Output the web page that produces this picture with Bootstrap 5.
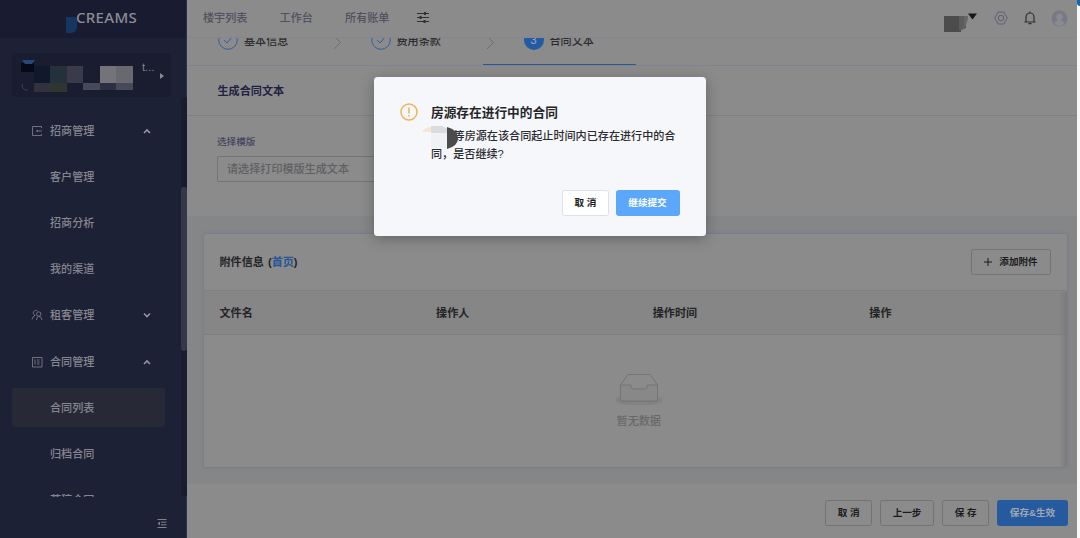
<!DOCTYPE html>
<html lang="zh-CN">
<head>
<meta charset="utf-8">
<title>CREAMS</title>
<link href="https://cdn.jsdelivr.net/npm/bootstrap@5.3.0/dist/css/bootstrap.min.css" rel="stylesheet">
<style>
body{width:1080px;height:538px;overflow:hidden;background:#f7f7f8;font:500 11.1px/18px "Liberation Sans","Noto Sans CJK SC",sans-serif;color:#242426}
svg{display:block;fill:none;stroke:currentColor;flex:none}
svg.solid{stroke:none}
.shell{height:538px}
.side{width:187px;background:#1d2136;color:#85868f;border-right:1px solid #2c2f48;position:relative}
.brand{height:38px;background:#191c30;padding:7px 0 0 76px;position:relative;font:500 15px/21px "Noto Sans",sans-serif;letter-spacing:.3px;color:#8b8c96}
.brand-blot{position:absolute;left:66px;top:17px;width:11px;height:16px;background:#16365f;border-radius:0 0 6px 0}
.org{margin:15px 15px 10.5px 12px;height:44px;background:#1a1c30;border-radius:4px;position:relative}
.org svg.mosaic{position:absolute;left:9px;top:6px}
.org-name{position:absolute;left:130px;top:5px}
.org-arrow{position:absolute;left:148px;top:20px;border:3px solid transparent;border-left:4px solid #8b8b90;border-right:0;height:0;width:0}
.menu-wrap{height:389px;overflow:hidden}
.track{position:absolute;right:-1px;top:97px;width:6px;height:399px;background:#191b2f}
.thumb{height:164px;margin-top:90px;border-radius:3px;background:#353947}
.menu-row{height:46.2px;padding-left:31px}
.menu-row svg{width:12px;height:12px;margin-right:7px;color:#777985;stroke-width:.9}
.menu-row .chev{margin:0 35px 0 auto;width:8px;height:8px;color:#94959d;stroke-width:1.6}
.sub-row{padding-left:50px}
.sub-active{background:#272936;margin:3.5px 21px 3.5px 12px;height:39.2px;padding-left:38px;border-radius:3px}
.fold{margin:22px 19px 0 auto;color:#80828b}
.page-col{width:890px;background:#8b8b8b}
.topbar{height:38px;background:#8b8b8b;border-bottom:1px solid #868690;padding:0 9px 2px 16px;color:#50515f}
.topbar .top-link{margin-right:32.2px}
.topbar .top-last{margin-right:28px}
.topbar svg{margin-top:1px}
.topbar .tune{margin-top:0}
.steps{height:27.5px;border-bottom:1px solid #80838e;overflow:hidden;color:#2b2b2d}
.step-in{position:relative;width:153px;height:27.5px;padding-left:41px}
.step-first{width:142.5px;padding-left:31px}
.step-in .txt{margin-top:-22px;padding-left:6px}
.step-in .ring,.step-num{margin-top:-24px}
.step-num{width:20px;height:20px;border-radius:50%;background:#245ba5;color:#a5a9b0;text-align:center;line-height:21px;flex:none}
.step-in .arr{position:absolute;left:3px;top:-2px;color:#6d6d6f}
.step-on::after{content:"";position:absolute;left:0;right:0;bottom:0;height:2px;background:#2c5791}
.sec-title{height:50px;padding:1.5px 0 0 30.5px;border-bottom:1px solid #7f7f85;font-weight:700;color:#1f2142}
.sec-form{height:100px;padding:17px 30px 0}
.sec-form label{font-size:9.6px;color:#414560;display:block}
.pick{width:270px;height:26px;border:1px solid #747474;border-radius:2px;margin-top:5px;padding-left:9px;line-height:25px;color:#606063}
.gap-area{background:#848688;height:268.5px;padding:17px 9px 0 15.5px}
.panel{height:235px;border:1px solid #7b8088;border-radius:3px;background:#8b8b8b;box-shadow:0 0 3px #7c7f84;position:relative;overflow:hidden}
.panel-top{height:57.5px;padding:0 16px;border-bottom:1px solid #808084;font-weight:700}
.panel-top .cap{word-spacing:1px}
.panel-top a{color:#275597;text-decoration:none}
.thead-row{height:43.5px;background:#868686;border-bottom:1px solid #7f7f82;padding:1.5px 0 0 16px;font-weight:700}
.thead-row div{width:216.6px;flex:none}
.shade{position:absolute;right:0;top:58px;bottom:0;width:8px;background:linear-gradient(90deg,transparent,#7b7b7d)}
.void{margin-top:37px;padding-left:7px;color:#686868;text-align:center}
.b{height:26.5px;border:1px solid #737373;border-radius:2.5px;font-size:9.6px;line-height:24px;text-align:center;font-weight:700;color:#1b1b1d;padding:0;white-space:nowrap}
.foot{height:54px;padding:15.5px 9px 0;gap:7.6px}
.foot .b{flex:none}
.foot .b-blue{background:#255a9f;border-color:#255a9f;color:#a1a7b0}
.dialog-box{position:absolute;left:374px;top:77px;width:331.5px;height:159px;background:#f6f7fb;border-radius:3.5px;box-shadow:0 3px 14px rgba(0,0,0,.28);padding:25px 26px 0;color:#2b2b2f}
.dialog-box h6{font:700 12.7px/22px "Liberation Sans","Noto Sans CJK SC",sans-serif;margin:0;color:#252528}
.dialog-box .msg{line-height:17.5px;width:250px;margin-top:4px;position:relative;text-indent:19.5px;white-space:nowrap}
.msg svg{position:absolute;left:-9px;top:-4px}
.dialog-box .acts{gap:6.5px;margin-top:26.5px}
.corner{position:absolute;right:0;top:0;width:3px;height:6px;background:#1767b0;border-radius:0 0 0 3px}
</style>
</head>
<body>
<div class="shell d-flex">
  <aside class="side d-flex flex-column flex-shrink-0">
    <div class="brand"><span class="brand-blot"></span>CREAMS</div>
    <div class="org">
      <svg class="mosaic solid" width="114" height="34"><path fill="#060a18" d="M0 4h13v9H0z"/><path fill="#244878" d="M1 1h13l-3 4H4z"/><path fill="#10192c" d="M13 7h16v17H13z"/><path fill="#24303a" d="M29 7h17v17H29z"/><path fill="#3a3b4a" d="M46 7h16v17H46z"/><path fill="#737379" d="M79 7h16v17H79z"/><path fill="#68696f" d="M95 7h17v17H95z"/><path fill="#30323d" d="M13 24h16v9H13z"/><path fill="#303532" d="M29 24h17v9H29z"/><path fill="#474958" d="M62 24h17v7H62zM95 24h17v7H95z"/><path fill="#2c2f43" d="M79 24h16v7H79z"/><path fill="none" stroke="#29436c" d="M1 25q0 7 6 6"/></svg>
      <span class="org-name">t...</span><span class="org-arrow"></span>
    </div>
    <div class="menu-wrap flex-shrink-0">
      <div class="d-flex flex-column">
        <div class="menu-row d-flex align-items-center"><svg viewBox="0 0 12 12"><path d="M10.500 3V1.500h-9v9h9V9M5 6h6M6.500 5v2"/></svg>招商管理<svg class="chev" viewBox="0 0 8 8"><path d="M1 6l3-3 3 3"/></svg></div>
        <div class="menu-row sub-row d-flex align-items-center">客户管理</div>
        <div class="menu-row sub-row d-flex align-items-center">招商分析</div>
        <div class="menu-row sub-row d-flex align-items-center">我的渠道</div>
        <div class="menu-row d-flex align-items-center"><svg viewBox="0 0 12 12"><path d="M4 6.200A2.500 2.500 0 1 1 6.500 2M1 10.500Q1.500 7 4.500 6.300M5.500 11Q5.500 7.800 7.800 7.300 10.500 7.500 11 11"/><circle cx="7.800" cy="5" r="2.200"/></svg>租客管理<svg class="chev" viewBox="0 0 8 8"><path d="M1 2.500l3 3 3-3"/></svg></div>
        <div class="menu-row d-flex align-items-center"><svg viewBox="0 0 12 12"><path d="M1.500 1.500h9.500v9.500H1.500zM4 3.500v5M6 4h2.500M6 6h2.500M6 8h2.500"/></svg>合同管理<svg class="chev" viewBox="0 0 8 8"><path d="M1 6l3-3 3 3"/></svg></div>
        <div class="menu-row sub-row sub-active d-flex align-items-center">合同列表</div>
        <div class="menu-row sub-row d-flex align-items-center">归档合同</div>
        <div class="menu-row sub-row d-flex align-items-center">草稿合同</div>
      </div>
    </div>
    <div class="track"><div class="thumb"></div></div>
    <svg class="fold" width="10" height="9" viewBox="0 0 10 9"><path d="M.5.5h9M4 3.200h5.500M4 5.800h5.500M.5 8.500h9"/><path d="M3 2.500v4L.7 4.500z" fill="currentColor" stroke="none"/></svg>
  </aside>

  <main class="page-col d-flex flex-column">
    <header class="topbar d-flex align-items-center flex-shrink-0">
      <span class="top-link">楼宇列表</span><span class="top-link">工作台</span><span class="top-link top-last">所有账单</span>
      <svg class="tune" width="12" height="13" viewBox="0 0 12 13" color="#303033" stroke-width="1.100"><path d="M0 2.500h12M0 6.500h12M0 10.500h12"/><path stroke-width="2" d="M8 1v3M3.500 5v3M7.500 9v3"/></svg>
      <svg class="solid ms-auto me-3" width="36" height="28"><path fill="#4c4c4d" d="M2 12h17v16H2z"/><path fill="#5c5c5d" d="M17 12h7v12l-7 3z"/><path fill="#676768" d="M22 12h4q0 8-6 13l2-4z"/><path fill="#171718" d="M26 9.500h9l-4.500 6z"/></svg>
      <svg class="me-3" width="14" height="14" viewBox="0 0 14 14" color="#5f6075"><path d="M4 1h6l1 2.300L13.300 7 11 10.700 10 13H4l-1-2.300L.7 7 3 3.300z"/><circle cx="7" cy="7" r="2.700"/></svg>
      <svg width="12" height="14" viewBox="0 0 12 14" color="#303033" style="margin-right:15.500px" stroke-width="1.200"><path d="M.5 11h11M2 11V6a4 4 0 0 1 8 0v5M6 .5V2M4.500 12.700h3"/></svg>
      <svg class="solid" width="17" height="17"><circle cx="8.500" cy="8.500" r="8" fill="#777a86"/><path fill="#898990" d="M8.500 3.500a3.500 3.500 0 0 1 2 6.300q0 1.700 3.300 2.700-2 3.500-5.300 3.500t-5.300-3.500q3.300-1 3.300-2.700a3.500 3.500 0 0 1 2-6.300z"/></svg>
    </header>
    <section class="steps d-flex flex-shrink-0">
      <div class="step-in step-first d-flex align-items-center"><svg class="ring" width="20" height="20" color="#315f9f"><circle cx="10" cy="10" r="9.300"/><path d="M6 10l3 3 5-6"/></svg><span class="txt">基本信息</span></div>
      <div class="step-in d-flex align-items-center"><svg class="arr" width="9" height="14"><path d="M1 0l6.500 6.500L1 13"/></svg><svg class="ring" width="20" height="20" color="#315f9f"><circle cx="10" cy="10" r="9.300"/><path d="M6 10l3 3 5-6"/></svg><span class="txt">费用条款</span></div>
      <div class="step-in step-on d-flex align-items-center"><svg class="arr" width="9" height="14"><path d="M1 0l6.500 6.500L1 13"/></svg><span class="step-num">3</span><span class="txt">合同文本</span></div>
    </section>
    <div class="sec-title d-flex align-items-center flex-shrink-0">生成合同文本</div>
    <div class="sec-form flex-shrink-0"><label>选择模版</label><div class="pick">请选择打印模版生成文本</div></div>
    <div class="gap-area flex-shrink-0">
      <div class="panel">
        <div class="panel-top d-flex align-items-center"><span class="cap">附件信息 (<a href="#">首页</a>)</span>
          <div class="b ms-auto d-flex align-items-center justify-content-center" style="width:80px;gap:7px"><svg width="8" height="8"><path d="M0 4h8M4 0v8"/></svg>添加附件</div></div>
        <div class="thead-row d-flex align-items-center"><div>文件名</div><div>操作人</div><div>操作时间</div><div class="flex-fill">操作</div></div>
        <div class="void"><svg class="mx-auto" width="50" height="34" viewBox="0 0 50 34"><ellipse cx="25" cy="28" rx="24" ry="5.500" fill="#828282" stroke="none"/><path fill="#8b8b8b" stroke="#747474" d="M6.500 13L14 2.500h22L43.500 13v14q0 2-2 2h-33q-2 0-2-2z"/><path fill="#888" stroke="#747474" d="M6.500 13H17v2q0 2 2 2h12q2 0 2-2v-2h10.500v14q0 2-2 2h-33q-2 0-2-2z"/></svg><div style="margin-top:6px">暂无数据</div></div>
        <div class="shade"></div>
      </div>
    </div>
    <footer class="foot d-flex justify-content-end flex-shrink-0">
      <div class="b" style="width:47px">取 消</div><div class="b" style="width:54.500px">上一步</div><div class="b" style="width:47.500px">保 存</div><div class="b b-blue" style="width:71px">保存&amp;生效</div>
    </footer>
  </main>
</div>

<div class="dialog-box" role="dialog">
  <div class="d-flex">
    <svg width="18" height="18" color="#eeb458" stroke-width="1.500" style="margin:1px 13px 0 0"><circle cx="9" cy="9" r="8"/><path d="M9 4.500v6M9 12v1.600"/></svg>
    <div><h6>房源存在进行中的合同</h6>
      <div class="msg">&nbsp;等房源在该合同起止时间内已存在进行中的合<br>同，是否继续?
        <svg class="solid" width="38" height="26"><path fill="#f7e6d4" d="M0 8q3-5 9-5v5z"/><path fill="#dcdcde" d="M9 2h11l6 3v4H9z"/><path fill="#f0f1f4" d="M9 9h16v15H9z"/><path fill="#4c4c4e" d="M25 3q11 3 11 11T25 25z"/></svg></div>
    </div>
  </div>
  <div class="acts d-flex justify-content-end"><div class="b" style="width:47px;background:#fff;border-color:#dfe0e6">取 消</div><div class="b" style="width:64px;background:#5ba7f9;border-color:#5ba7f9;color:#fff">继续提交</div></div>
</div>
<div class="corner"></div>
</body>
</html>
